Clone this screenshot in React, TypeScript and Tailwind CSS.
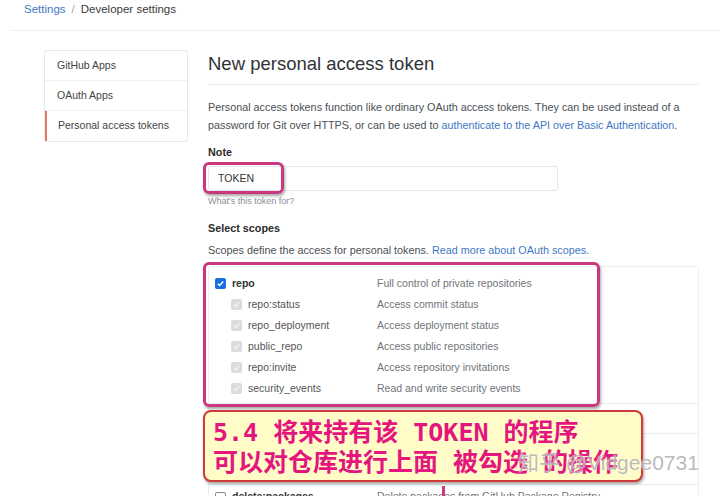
import React from 'react';

const SANS = { fontFamily: '"Liberation Sans", Arial, sans-serif' };

const SIDEBAR = ['GitHub Apps', 'OAuth Apps', 'Personal access tokens'];

const REPO_SCOPES = [
  { name: 'repo:status', desc: 'Access commit status' },
  { name: 'repo_deployment', desc: 'Access deployment status' },
  { name: 'public_repo', desc: 'Access public repositories' },
  { name: 'repo:invite', desc: 'Access repository invitations' },
  { name: 'security_events', desc: 'Read and write security events' },
];

const Check = ({ on, muted }: { on?: boolean; muted?: boolean }) => {
  if (muted) {
    return (
      <span className="w-[11px] h-[11px] rounded-[2px] bg-[#dcdcdc] flex items-center justify-center shrink-0">
        <svg width="9" height="9" viewBox="0 0 10 10">
          <path d="M2 5.2l2 2 4-4.4" fill="none" stroke="#f4f4f4" strokeWidth="1.6" />
        </svg>
      </span>
    );
  }
  if (on) {
    return (
      <span className="w-[11px] h-[11px] rounded-[2px] bg-[#1a6fe0] flex items-center justify-center shrink-0">
        <svg width="9" height="9" viewBox="0 0 10 10">
          <path d="M2 5.2l2 2 4-4.4" fill="none" stroke="#fff" strokeWidth="1.7" />
        </svg>
      </span>
    );
  }
  return <span className="w-[11px] h-[11px] rounded-[2px] border border-[#8a8a8a] bg-white shrink-0" />;
};

export default function App() {
  return (
    <div className="relative w-[720px] h-[496px] overflow-hidden bg-white text-[#24292e]" style={SANS}>
      {/* breadcrumb */}
      <div className="ml-[10px] h-[31px] border-b border-[#efefef] pl-[14px] pt-[1px] text-[11.5px] leading-[16px]">
        <span className="text-[#3f78c3]">Settings</span>
        <span className="text-[#9aa0a6] mx-[6px]">/</span>
        <span className="text-[#3b3b3b]">Developer settings</span>
      </div>

      <div className="flex pl-[44px] pt-[19px] gap-[20px]">
        {/* sidebar */}
        <div className="w-[144px] self-start border border-[#e6e8ea] rounded-[3px] text-[10.5px] text-[#444]">
          {SIDEBAR.map((item, i) => (
            <div
              key={item}
              className={
                i === SIDEBAR.length - 1
                  ? 'h-[30px] flex items-center pl-[11px] border-l-2 border-l-[#e8765f]'
                  : 'h-[30px] flex items-center pl-[12px] border-b border-[#eef0f2]'
              }
            >
              {item}
            </div>
          ))}
        </div>

        {/* main */}
        <div className="w-[491px]">
          <h1 className="text-[18.5px] leading-[28px] text-[#2f3337] pb-[6px] border-b border-[#eeeeee]">
            New personal access token
          </h1>
          <p className="mt-[13px] text-[10.8px] leading-[18px] text-[#4a4f55]">
            Personal access tokens function like ordinary OAuth access tokens. They can be used instead of a
            password for Git over HTTPS, or can be used to{' '}
            <span className="text-[#3f78c3]">authenticate to the API over Basic Authentication</span>.
          </p>

          <div className="mt-[10px] text-[10.8px] leading-[16px] font-bold text-[#2b2b2b]">Note</div>
          <div className="mt-[6px] w-[350px] h-[25px] border border-[#e4e6e8] rounded-[3px] flex items-center pl-[9px] text-[10.5px] text-[#333]">
            TOKEN
          </div>
          <div className="mt-[3px] text-[9px] leading-[14px] text-[#8a8f95]">What's this token for?</div>

          <div className="mt-[12px] text-[10.8px] leading-[16px] font-bold text-[#2b2b2b]">Select scopes</div>
          <div className="mt-[6px] text-[10.8px] leading-[16px] text-[#4a4f55]">
            Scopes define the access for personal tokens.{' '}
            <span className="text-[#3f78c3]">Read more about OAuth scopes.</span>
          </div>

          {/* scopes table */}
          <div className="mt-[8px] border border-[#eceef0] rounded-[3px] text-[10.5px]">
            <div className="pl-[6px] pt-[6px] pb-[4px] border-b border-[#eceef0]">
              <div className="flex items-center h-[21px]">
                <div className="w-[162px] flex items-center gap-[6px]">
                  <Check on />
                  <span className="font-bold text-[#333]">repo</span>
                </div>
                <span className="text-[#70757a]">Full control of private repositories</span>
              </div>
              {REPO_SCOPES.map((s) => (
                <div key={s.name} className="flex items-center h-[21px]">
                  <div className="w-[162px] flex items-center gap-[6px] pl-[16px]">
                    <Check muted />
                    <span className="text-[#555]">{s.name}</span>
                  </div>
                  <span className="text-[#70757a]">{s.desc}</span>
                </div>
              ))}
            </div>
            <div className="h-[30px] pl-[6px] flex items-center border-b border-[#eceef0]">
              <div className="w-[162px] flex items-center gap-[6px]">
                <Check />
                <span className="font-bold text-[#333]">workflow</span>
              </div>
              <span className="text-[#70757a]">Update workflows</span>
            </div>
            <div className="h-[51px] pl-[6px] pt-[4px] border-b border-[#eceef0]">
              <div className="flex items-center h-[21px]">
                <div className="w-[162px] flex items-center gap-[6px]">
                  <Check />
                  <span className="font-bold text-[#333]">write:packages</span>
                </div>
                <span className="text-[#70757a]">Upload packages</span>
              </div>
              <div className="flex items-center h-[21px]">
                <div className="w-[162px] flex items-center gap-[6px] pl-[16px]">
                  <Check />
                  <span className="text-[#555]">read:packages</span>
                </div>
                <span className="text-[#70757a]">Download packages</span>
              </div>
            </div>
            <div className="pl-[6px] pt-[3px] flex items-center h-[21px]">
              <div className="w-[162px] flex items-center gap-[6px]">
                <Check />
                <span className="font-bold text-[#333]">delete:packages</span>
              </div>
              <span className="text-[#70757a]">Delete packages from GitHub Package Registry</span>
            </div>
          </div>
        </div>
      </div>

      {/* annotation overlays */}
      <div className="absolute left-[203px] top-[162px] w-[81px] h-[32px] rounded-[6px] border-[3px] border-[#c8387f] shadow-[1px_2px_3px_rgba(0,0,0,0.35)]" />
      <div className="absolute left-[203px] top-[262px] w-[397px] h-[145px] rounded-[6px] border-[3px] border-[#c8387f] shadow-[1px_2px_3px_rgba(0,0,0,0.35)]" />
      <div className="absolute left-[442px] top-[486px] w-[3px] h-[10px] bg-[#d23a7f]" />

      <div
        className="absolute left-[203px] top-[410px] w-[440px] h-[72px] rounded-[8px] border-2 border-[#cf3a3a] bg-[#fffcc8] shadow-[1px_2px_3px_rgba(0,0,0,0.35)] pl-[8px] pt-[6px] text-[25px] leading-[30px] font-bold text-[#e4157e]"
        style={{ fontFamily: '"DejaVu Sans Mono", "Noto Sans CJK SC", monospace' }}
      >
        <div className="whitespace-nowrap">5.4 将来持有该 TOKEN 的程序</div>
        <div className="whitespace-nowrap">可以对仓库进行上面 被勾选 的操作</div>
      </div>

      <div
        className="absolute left-[518px] top-[450px] text-[21px] leading-[26px] text-[#a8a8a8]/80 whitespace-nowrap"
        style={{ fontFamily: '"Liberation Sans", "Noto Sans CJK SC", sans-serif', textShadow: '0 0 2px #fff' }}
      >
        知乎 @Vidgee0731
      </div>
    </div>
  );
}
